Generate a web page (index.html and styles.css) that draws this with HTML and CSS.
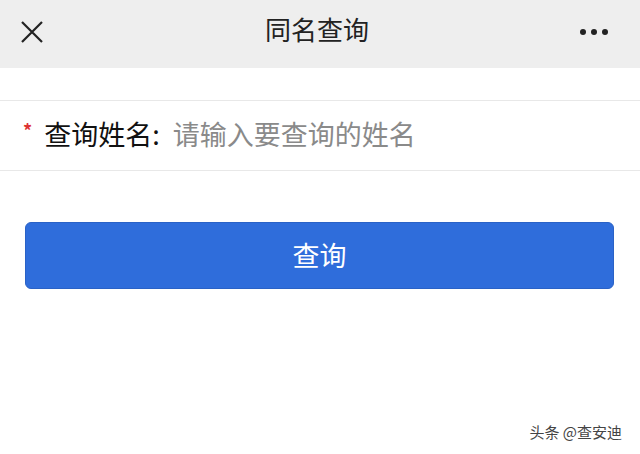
FILE: index.html
```html
<!DOCTYPE html>
<html lang="zh-CN">
<head>
  <meta charset="UTF-8" />
  <meta name="viewport" content="width=device-width, initial-scale=1.0" />
  <title>同名查询</title>
  <link rel="stylesheet" href="styles.css">
</head>
<body>
  <header class="topbar">
    <svg class="close" width="24" height="24" viewBox="0 0 24 24">
      <path d="M2 2 L22 22 M22 2 L2 22" stroke="#222" stroke-width="2.2" fill="none" />
    </svg>
    <h1>同名查询</h1>
    <div class="more"><span></span><span></span><span></span></div>
  </header>

  <form class="form">
    <div class="field">
      <span class="req">*</span>
      <label for="name">查询姓名:</label>
      <input id="name" type="text" placeholder="请输入要查询的姓名">
    </div>
    <button type="button" class="btn">查询</button>
  </form>

  <div class="mark">头条 @查安迪</div>
</body>
</html>
```

FILE: styles.css
```css
body {
  margin: 0;
  font-family: "Noto Sans CJK SC", "Noto Sans", sans-serif;
  background: #fff;
  color: #222;
  width: 640px;
  height: 454px;
  overflow: hidden;
  position: relative;
}
.topbar {
  height: 68px;
  background: #eeeeee;
  display: flex;
  align-items: center;
  justify-content: space-between;
  padding: 0 32px 10px 20px;
  box-sizing: border-box;
}
.topbar h1 {
  margin: 0;
  font-size: 26px;
  font-weight: 400;
  color: #222;
  padding-left: 10px;
  line-height: 1;
}
.close {
  display: block;
  margin-top: 6px;
}
.more {
  display: flex;
  gap: 5px;
  margin-top: 6px;
}
.more span {
  width: 6px;
  height: 6px;
  border-radius: 50%;
  background: #222;
}
.form {
  margin-top: 32px;
}
.field {
  height: 71px;
  border-top: 1px solid #e8e8e8;
  border-bottom: 1px solid #e8e8e8;
  display: flex;
  align-items: center;
  padding: 0 0 4px 23px;
  box-sizing: border-box;
}
.req {
  color: #d33;
  font-size: 18px;
  font-weight: 700;
  margin-right: 12px;
  position: relative;
  top: -4px;
}
.field label {
  font-size: 27px;
  color: #111;
  margin-right: 13px;
}
.field input {
  flex: 1;
  border: none;
  outline: none;
  font-family: inherit;
  font-size: 27px;
  color: #222;
  padding: 0;
  background: transparent;
}
.field input::placeholder {
  color: #8a8a8a;
}
.btn {
  display: block;
  margin: 51px 0 0 25px;
  width: 589px;
  height: 67px;
  padding-bottom: 4px;
  background: #2f6ddb;
  border: 1px solid #2a62c6;
  border-radius: 6px;
  color: #fff;
  font-family: inherit;
  font-size: 27px;
}
.mark {
  position: absolute;
  right: 18px;
  bottom: 12px;
  font-size: 15px;
  color: #444;
  text-shadow: 1px 1px 0 #fff, -1px -1px 0 #fff;
}
```
